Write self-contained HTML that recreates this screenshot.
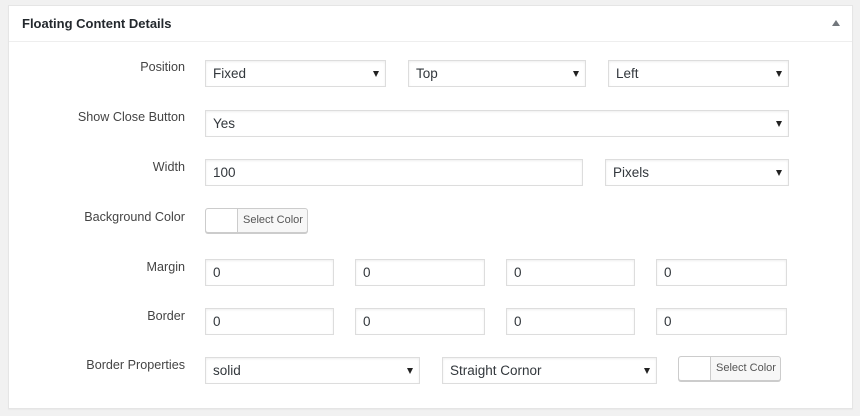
<!DOCTYPE html>
<html><head><meta charset="utf-8"><style>
body{margin:0;width:860px;height:416px;background:#f1f1f1;font-family:"Liberation Sans",sans-serif;position:relative;overflow:hidden}
.panel{position:absolute;left:8px;top:5px;width:843px;height:402px;background:#fff;border:1px solid #e5e5e5;box-shadow:0 1px 1px rgba(0,0,0,.04)}
.hd{position:absolute;left:0;top:0;right:0;height:35px;border-bottom:1px solid #eee}
.hd b{position:absolute;left:13px;top:10px;font-size:13px;color:#23282d}
.hd i{position:absolute;right:12px;top:14px;width:0;height:0;border-left:4px solid transparent;border-right:4px solid transparent;border-bottom:6px solid #72777c}
.l{position:absolute;right:675px;font-size:12.6px;color:#444;white-space:nowrap}
.f{position:absolute;box-sizing:border-box;border:1px solid #ddd;box-shadow:inset 0 1px 2px rgba(0,0,0,.07);height:27px;font-size:13.5px;color:#32373c;padding:5px 0 0 7px;background:#fff}
.s::after{content:"";position:absolute;right:6px;top:10px;border-left:3.5px solid transparent;border-right:3.5px solid transparent;border-top:6px solid #222}
.b{position:absolute;box-sizing:border-box;height:25px;border:1px solid #ccc;border-radius:3px;background:#f7f7f7;box-shadow:0 1px 0 #ccc}
.b span{position:absolute;left:0;top:0;width:31px;height:23px;background:#fff;border-right:1px solid #ccc;border-radius:3px 0 0 3px}
.b em{position:absolute;left:37px;top:5px;font-style:normal;font-size:11px;color:#555}
</style></head><body>
<div class="panel"><div class="hd"><b>Floating Content Details</b><i></i></div></div>
<div class="l" style="top:60px">Position</div>
<div class="f s" style="left:205px;top:60px;width:181px">Fixed</div>
<div class="f s" style="left:408px;top:60px;width:178px">Top</div>
<div class="f s" style="left:608px;top:60px;width:181px">Left</div>
<div class="l" style="top:110px">Show Close Button</div>
<div class="f s" style="left:205px;top:110px;width:584px">Yes</div>
<div class="l" style="top:160px">Width</div>
<div class="f" style="left:205px;top:159px;width:378px">100</div>
<div class="f s" style="left:605px;top:159px;width:184px">Pixels</div>
<div class="l" style="top:210px">Background Color</div>
<div class="b" style="left:205px;top:208px;width:103px"><span></span><em>Select Color</em></div>
<div class="l" style="top:260px">Margin</div>
<div class="f" style="left:205px;top:259px;width:129px">0</div>
<div class="f" style="left:355px;top:259px;width:130px">0</div>
<div class="f" style="left:506px;top:259px;width:129px">0</div>
<div class="f" style="left:656px;top:259px;width:131px">0</div>
<div class="l" style="top:309px">Border</div>
<div class="f" style="left:205px;top:308px;width:129px">0</div>
<div class="f" style="left:355px;top:308px;width:130px">0</div>
<div class="f" style="left:506px;top:308px;width:129px">0</div>
<div class="f" style="left:656px;top:308px;width:131px">0</div>
<div class="l" style="top:358px">Border Properties</div>
<div class="f s" style="left:205px;top:357px;width:215px">solid</div>
<div class="f s" style="left:442px;top:357px;width:215px">Straight Cornor</div>
<div class="b" style="left:678px;top:356px;width:103px"><span></span><em>Select Color</em></div>
</body></html>
